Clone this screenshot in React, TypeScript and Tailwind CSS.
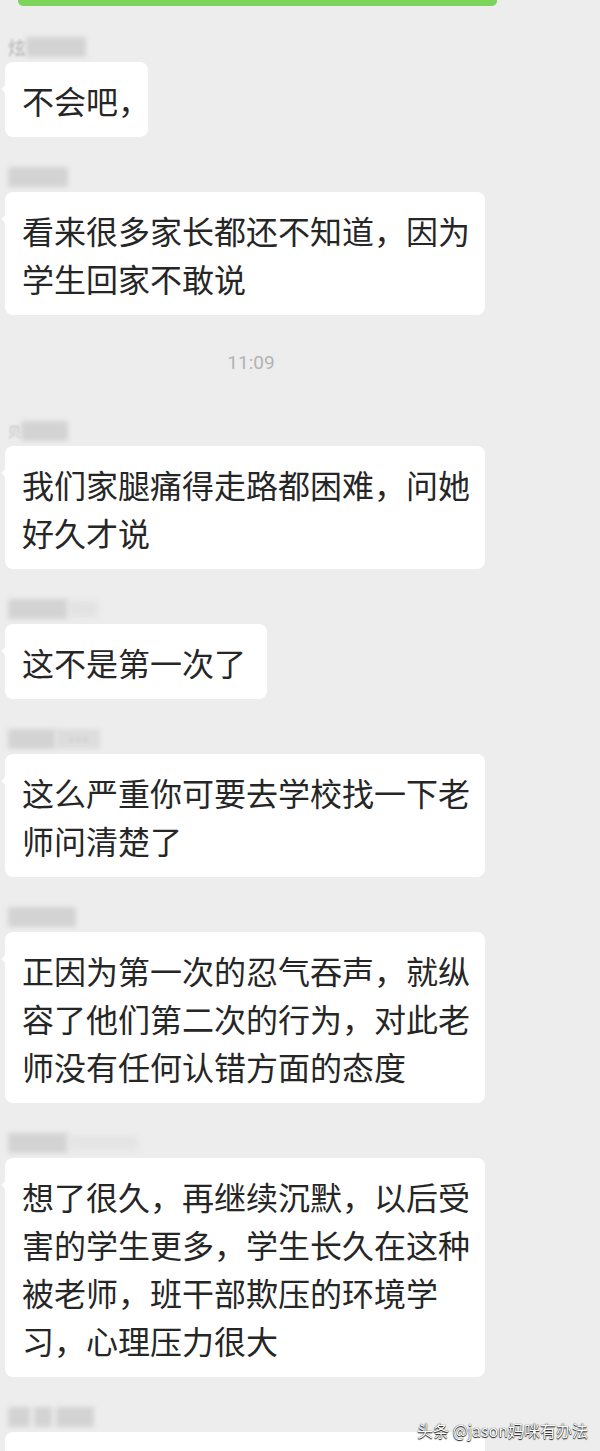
import React from "react";

function Blur({ w, dark = false }: { w: string; dark?: boolean }) {
  return (
    <div
      className={`${w} h-[20px] ${dark ? "bg-[#d3d3d3]" : "bg-[#dadada]"} blur-[2.5px] rounded-[2px]`}
    />
  );
}

function Bubble({ children, w }: { children: React.ReactNode; w: string }) {
  return (
    <div className={`relative ${w} bg-white rounded-[8px] pl-[17px] pr-[15px] pt-[14px] pb-[13px] text-[32px] leading-[48px] text-[#262626]`}>
      <span className="absolute left-[-4px] top-[22px] w-0 h-0 border-y-[5px] border-y-transparent border-r-[5px] border-r-white opacity-80" />
      {children}
    </div>
  );
}

function Message({ name, w, children }: { name: React.ReactNode; w: string; children: React.ReactNode }) {
  return (
    <div className="flex flex-col pl-[5px] mb-[29px]">
      <div className="h-[22px] flex items-center pl-[3px]">{name}</div>
      <div className="mt-[4px]">
        <Bubble w={w}>{children}</Bubble>
      </div>
    </div>
  );
}

export default function App() {
  return (
    <div className="relative w-[600px] h-[1451px] overflow-hidden bg-[#ededed] font-['Noto_Sans_CJK_SC',sans-serif]">
      <div className="ml-[18px] w-[479px] h-[6px] bg-[#7dd45a] rounded-b-[5px]" />
      <div className="h-[30px]" />

      <Message
        w="w-[143px] whitespace-nowrap"
        name={
          <div className="flex items-center">
            <span className="text-[18px] leading-[20px] text-[#b0b0b0] blur-[0.8px]">炫</span>
            <Blur w="w-[60px]" dark />
          </div>
        }
      >
        不会吧<span className="inline-block w-[12px]">，</span>
      </Message>

      <Message w="w-[480px]" name={<Blur w="w-[60px]" dark />}>
        看来很多家长都还不知道，因为学生回家不敢说
      </Message>

      <div className="w-[502px] h-[76px] pt-[8px] text-center text-[19px] leading-[22px] text-[#b3b3b3] font-['Roboto',sans-serif]">
        11:09
      </div>

      <Message
        w="w-[480px]"
        name={
          <div className="flex items-center">
            <span className="text-[13px] leading-[20px] text-[#b5b5b5] blur-[0.8px]">贝</span>
            <Blur w="w-[47px]" dark />
          </div>
        }
      >
        我们家腿痛得走路都困难，问她好久才说
      </Message>

      <Message
        w="w-[262px] whitespace-nowrap"
        name={
          <div className="flex items-center">
            <Blur w="w-[60px]" dark />
            <div className="w-[30px] h-[16px] bg-[#e2e2e2] blur-[3px]" />
          </div>
        }
      >
        这不是第一次了
      </Message>

      <Message
        w="w-[480px]"
        name={
          <div className="flex items-center">
            <Blur w="w-[48px]" dark />
            <div className="w-[44px] h-[20px] bg-[#dddddd] blur-[2px] flex items-center justify-center gap-[4px]">
              <span className="w-[3px] h-[3px] bg-[#bbbbbb] rounded-full" />
              <span className="w-[3px] h-[3px] bg-[#bbbbbb] rounded-full" />
              <span className="w-[3px] h-[3px] bg-[#bbbbbb] rounded-full" />
            </div>
          </div>
        }
      >
        这么严重你可要去学校找一下老师问清楚了
      </Message>

      <Message w="w-[480px]" name={<Blur w="w-[68px]" dark />}>
        正因为第一次的忍气吞声，就纵容了他们第二次的行为，对此老师没有任何认错方面的态度
      </Message>

      <Message
        w="w-[480px]"
        name={
          <div className="flex items-center">
            <Blur w="w-[60px]" dark />
            <div className="w-[70px] h-[14px] bg-[#e4e4e4] blur-[3px]" />
          </div>
        }
      >
        想了很久，再继续沉默，以后受害的学生更多，学生长久在这种被老师，班干部欺压的环境学习，心理压力很大
      </Message>

      <div className="flex flex-col pl-[5px]">
        <div className="h-[22px] flex items-center pl-[3px] gap-[4px]">
          <Blur w="w-[22px]" dark />
          <Blur w="w-[18px]" dark />
          <Blur w="w-[38px]" dark />
        </div>
        <div className="mt-[4px] w-[480px] h-[60px] bg-white rounded-[8px]" />
      </div>

      <div className="absolute right-[12px] top-[1419px] text-[16px] leading-[22px] text-white font-['Noto_Sans_CJK_SC',sans-serif] [text-shadow:0_0_1px_#000,0_1px_1px_rgba(0,0,0,0.9)]">
        头条 @jason妈咪有办法
      </div>
    </div>
  );
}
